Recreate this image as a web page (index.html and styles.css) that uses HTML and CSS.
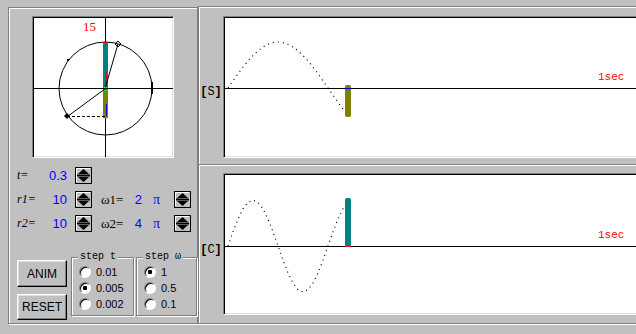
FILE: index.html
```html
<!DOCTYPE html>
<html lang="en">
<head>
    <meta charset="UTF-8">
    <title>Phasor Sum Simulator</title>
    <link rel="stylesheet" href="styles.css">
</head>
<body>
<div class="app">
    <div class="control-panel">
        <div class="phasor-box">
            <svg class="phasor" width="140" height="140" viewBox="33 17 140 140">
                <line class="axis" x1="105.5" y1="17" x2="105.5" y2="157"/>
                <line class="axis" x1="33" y1="88.5" x2="173" y2="88.5"/>
                <circle class="ring" cx="105.5" cy="88.5" r="46.5"/>
                <rect x="151" y="82" width="2" height="12"/>
                <rect x="67" y="59" width="2" height="2"/>
                <rect class="bar-c" x="103" y="42" width="5" height="46"/>
                <rect class="mark-red" x="103" y="42" width="5" height="1"/>
                <line class="line-red" x1="106.5" y1="72" x2="106" y2="86"/>
                <rect class="bar-s" x="103" y="89" width="5" height="29"/>
                <line class="line-blue" x1="106.5" y1="104" x2="106.5" y2="116"/>
                <rect class="mark-green" x="104" y="87" width="3" height="1"/>
                <rect class="mark-green" x="104" y="90" width="3" height="1"/>
                <line class="axis" x1="105.5" y1="87" x2="118" y2="44"/>
                <path class="marker" d="M118 41l3 3-3 3-3-3z"/>
                <line class="axis" x1="105.5" y1="88.5" x2="67.5" y2="116.5"/>
                <line class="dash" x1="67" y1="116.5" x2="105" y2="116.5"/>
                <path d="M67 113l3 3-3 3-3-3z"/>
                <text class="frame-no" x="83" y="31">15</text>
            </svg>
        </div>

        <div class="param-row first">
            <span class="param-label">t=</span>
            <span class="param-value">0.3</span>
            <span class="spin"><svg width="17" height="17" viewBox="0 0 17 17"><rect x="0.5" y="0.5" width="16" height="16" fill="#c0c0c0" stroke="#000"/><path d="M1.5 15V1.5H15" fill="none" stroke="#fff"/><path d="M8.5 2L14 7H3Z"/><rect x="2" y="7.5" width="13" height="2"/><path d="M3 10H14L8.5 15Z"/></svg></span>
        </div>
        <div class="param-row">
            <span class="param-label">r1=</span>
            <span class="param-value">10</span>
            <span class="spin"><svg width="17" height="17" viewBox="0 0 17 17"><rect x="0.5" y="0.5" width="16" height="16" fill="#c0c0c0" stroke="#000"/><path d="M1.5 15V1.5H15" fill="none" stroke="#fff"/><path d="M8.5 2L14 7H3Z"/><rect x="2" y="7.5" width="13" height="2"/><path d="M3 10H14L8.5 15Z"/></svg></span>
            <span class="omega-label">ω1=</span>
            <span class="omega-value">2</span>
            <span class="pi">π</span>
            <span class="spin"><svg width="17" height="17" viewBox="0 0 17 17"><rect x="0.5" y="0.5" width="16" height="16" fill="#c0c0c0" stroke="#000"/><path d="M1.5 15V1.5H15" fill="none" stroke="#fff"/><path d="M8.5 2L14 7H3Z"/><rect x="2" y="7.5" width="13" height="2"/><path d="M3 10H14L8.5 15Z"/></svg></span>
        </div>
        <div class="param-row">
            <span class="param-label">r2=</span>
            <span class="param-value">10</span>
            <span class="spin"><svg width="17" height="17" viewBox="0 0 17 17"><rect x="0.5" y="0.5" width="16" height="16" fill="#c0c0c0" stroke="#000"/><path d="M1.5 15V1.5H15" fill="none" stroke="#fff"/><path d="M8.5 2L14 7H3Z"/><rect x="2" y="7.5" width="13" height="2"/><path d="M3 10H14L8.5 15Z"/></svg></span>
            <span class="omega-label">ω2=</span>
            <span class="omega-value">4</span>
            <span class="pi">π</span>
            <span class="spin"><svg width="17" height="17" viewBox="0 0 17 17"><rect x="0.5" y="0.5" width="16" height="16" fill="#c0c0c0" stroke="#000"/><path d="M1.5 15V1.5H15" fill="none" stroke="#fff"/><path d="M8.5 2L14 7H3Z"/><rect x="2" y="7.5" width="13" height="2"/><path d="M3 10H14L8.5 15Z"/></svg></span>
        </div>

        <div class="bottom-row">
            <div class="buttons">
                <button class="btn">ANIM</button>
                <button class="btn reset">RESET</button>
            </div>
            <div class="group group-t">
                <span class="legend">step t</span>
                <label class="radio-row"><input type="radio" name="stept"> 0.01</label>
                <label class="radio-row"><input type="radio" name="stept" checked> 0.005</label>
                <label class="radio-row"><input type="radio" name="stept"> 0.002</label>
            </div>
            <div class="group group-w">
                <span class="legend">step ω</span>
                <label class="radio-row"><input type="radio" name="stepw" checked> 1</label>
                <label class="radio-row"><input type="radio" name="stepw"> 0.5</label>
                <label class="radio-row"><input type="radio" name="stepw"> 0.1</label>
            </div>
        </div>
    </div>

    <div class="graph-column">
        <div class="graph-panel panel-s">
            <div class="graph-label"><span class="bracket">[</span>S<span class="bracket">]</span></div>
            <div class="graph-box">
                <svg width="435" height="140" viewBox="224 17 435 140">
                    <line class="axis" x1="224" y1="88.5" x2="659" y2="88.5"/>
                    <polyline class="wave" points="228,88 233,80.8 238,73.8 243,67.1 248,60.9 253,55.5 258,50.8 263,47 268,44.3 273,42.6 278,42 283,42.6 288,44.3 293,47 298,50.8 303,55.5 308,60.9 313,67.1 318,73.8 323,80.8 328,88 333,95.2 338,102.2 343,108.9 348,115.1"/>
                    <rect class="bar-s" x="345" y="85" width="6" height="32" rx="2"/>
                    <rect class="mark-blue" x="345" y="88" width="6" height="1"/>
                    <text class="sec" x="598" y="80">1sec</text>
                </svg>
            </div>
        </div>
        <div class="graph-panel panel-c">
            <div class="graph-label"><span class="bracket">[</span>C<span class="bracket">]</span></div>
            <div class="graph-box">
                <svg width="435" height="140" viewBox="224 174 435 140">
                    <line class="axis" x1="224" y1="246.5" x2="659" y2="246.5"/>
                    <polyline class="wave" points="228,246 233,231.8 238,219 243,208.8 248,202.3 253,200 258,202.3 263,208.8 268,219 273,231.8 278,246 283,260.2 288,273 293,283.2 298,289.7 303,292 308,289.7 313,283.2 318,273 323,260.2 328,246 333,231.8 338,219 343,208.8 348,202.3"/>
                    <rect class="bar-c" x="345" y="198" width="6" height="49" rx="2"/>
                    <rect class="mark-red" x="345" y="246" width="6" height="1"/>
                    <text class="sec" x="598" y="238">1sec</text>
                </svg>
            </div>
        </div>
    </div>
</div>
</body>
</html>
```

FILE: styles.css
```css
body {
    margin: 0;
    background-color: #c0c0c0;
    overflow: hidden;
    font-family: "Liberation Sans", Arial, sans-serif;
    color: #000;
}
.app {
    display: flex;
    align-items: flex-start;
    box-sizing: border-box;
    width: 636px;
    padding: 6px 0 0 8px;
}

/* left side: phasor + controls */
.control-panel {
    display: flex;
    flex-direction: column;
    flex-shrink: 0;
    width: 190px;
    height: 317px;
    margin-top: 1px;
    padding: 1px 0 0 1px;
    box-sizing: border-box;
    border: 1px solid #808080;
    box-shadow: inset 1px 1px 0 #fff, 1px 1px 0 #fff;
}
.phasor-box,
.graph-box {
    box-sizing: border-box;
    flex-shrink: 0;
    height: 142px;
    background: #fff;
    border: 1px solid;
    border-color: #808080 #fff #fff #808080;
    box-shadow: inset 1px 1px 0 #000, inset -1px -1px 0 #dfdfdf;
    overflow: hidden;
}
.phasor-box {
    width: 142px;
    margin: 7px 0 0 22px;
}
.phasor-box svg,
.graph-box svg {
    display: block;
}
.axis { stroke: #000; stroke-width: 1; }
.ring { fill: none; stroke: #000; stroke-width: 1; }
.dash { stroke: #000; stroke-dasharray: 3 2; }
.marker { fill: none; stroke: #000; }
.bar-c { fill: #008080; }
.bar-s { fill: #808000; }
.mark-red { fill: #f00; }
.mark-blue { fill: #00f; }
.mark-green { fill: #0f0; }
.line-red { stroke: #f00; }
.line-blue { stroke: #00f; }
.frame-no {
    fill: #f00;
    font-family: "Liberation Serif", serif;
    font-size: 13px;
}

.param-row {
    display: flex;
    align-items: center;
    height: 17px;
    margin-top: 7px;
    padding-left: 7px;
}
.param-row.first {
    margin-top: 9px;
}
.param-label {
    width: 28px;
    font-family: "Liberation Serif", serif;
    font-style: italic;
    font-size: 12px;
}
.param-value {
    width: 22px;
    text-align: right;
    color: #00f;
    font-size: 13px;
}
.spin {
    display: block;
    width: 17px;
    height: 17px;
    margin-left: 8px;
}
.omega-label {
    width: 30px;
    margin-left: 9px;
    font-family: "Liberation Serif", serif;
    font-size: 13px;
}
.omega-value {
    width: 11px;
    text-align: right;
    color: #00f;
    font-size: 13px;
}
.pi {
    width: 21px;
    margin-left: 11px;
    color: #00f;
    font-family: "Liberation Serif", serif;
    font-size: 14px;
}
.pi + .spin {
    margin-left: 0;
}

.bottom-row {
    display: flex;
    align-items: flex-start;
    margin-top: 25px;
    padding-left: 7px;
}
.buttons {
    display: flex;
    flex-direction: column;
    gap: 7px;
    margin-top: 3px;
}
.btn {
    width: 50px;
    height: 27px;
    padding: 0;
    background: #c0c0c0;
    border: 1px solid;
    border-color: #fff #000 #000 #fff;
    box-shadow: inset -1px -1px 0 #808080, inset 1px 1px 0 #dfdfdf;
    font-family: "Liberation Sans", Arial, sans-serif;
    font-size: 12px;
    color: #000;
}
.btn.reset {
    height: 26px;
}
.group {
    position: relative;
    box-sizing: border-box;
    height: 59px;
    padding: 6px 0 0 7px;
    border: 1px solid #808080;
    box-shadow: inset 1px 1px 0 #fff, 1px 1px 0 #fff;
}
.group-t {
    width: 63px;
    margin-left: 4px;
}
.group-w {
    width: 61px;
    margin-left: 2px;
}
.legend {
    position: absolute;
    top: -6px;
    left: 6px;
    padding: 0 2px;
    background: #c0c0c0;
    font-family: "Liberation Mono", monospace;
    font-size: 10px;
    line-height: 10px;
}
.radio-row {
    display: flex;
    align-items: center;
    height: 16px;
    font-size: 11px;
}
.radio-row input {
    appearance: none;
    width: 12px;
    height: 12px;
    margin: 0 5px 0 0;
    border-radius: 50%;
    border: 1px solid;
    border-color: #808080 #fff #fff #808080;
    box-shadow: inset 1px 1px 0 #000;
    background: #fff;
}
.radio-row input:checked {
    background: radial-gradient(circle, #000 0 2px, #fff 2.5px);
}

/* right side: graphs */
.graph-column {
    flex: 1;
    min-width: 0;
    overflow: hidden;
}
.graph-panel {
    display: flex;
    box-sizing: border-box;
    border-left: 1px solid #808080;
    border-top: 1px solid #808080;
    box-shadow: inset 1px 1px 0 #fff;
}
.panel-s {
    height: 158px;
    padding-top: 9px;
}
.panel-c {
    height: 160px;
    padding-top: 8px;
    border-bottom: 1px solid #808080;
    box-shadow: inset 1px 1px 0 #fff, inset 0 -1px 0 #c0c0c0;
}
.graph-column::after {
    content: "";
    display: block;
    height: 1px;
    background: #fff;
}
.graph-label {
    flex-shrink: 0;
    width: 24px;
    align-self: center;
    margin-top: 4px;
    text-align: center;
    font-family: "Liberation Mono", monospace;
    font-size: 12px;
}
.bracket {
    font-weight: bold;
}
.graph-box {
    width: 437px;
}
.wave {
    fill: none;
    stroke: #000;
    stroke-width: 1.2;
    stroke-dasharray: 1 4;
}
.sec {
    fill: #f00;
    font-family: "Liberation Mono", monospace;
    font-size: 11px;
}
```
